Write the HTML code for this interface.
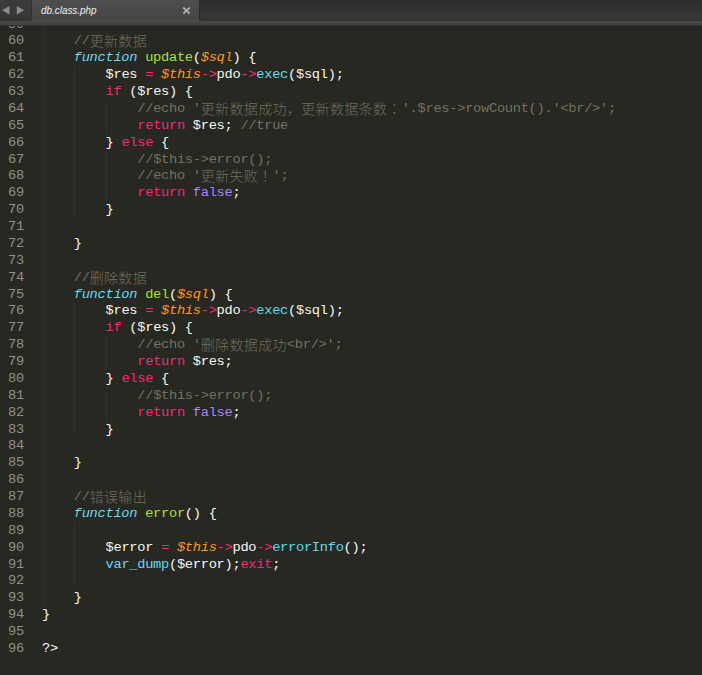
<!DOCTYPE html>
<html lang="zh-CN">
<head>
<meta charset="utf-8">
<title>db.class.php</title>
<style>
html,body{margin:0;padding:0;}
body{width:702px;height:675px;overflow:hidden;background:#272822;position:relative;font-family:"Liberation Mono","Noto Sans CJK SC",monospace;}
#ed{position:absolute;left:0;top:0;width:702px;height:675px;overflow:hidden;background:#272822;}
.ln,.cl{position:absolute;height:17px;line-height:17px;white-space:pre;font-family:"Liberation Mono","Noto Sans CJK SC",monospace;font-size:13.7px;letter-spacing:-0.28px;}
.ln{left:8px;width:16px;color:#8f908a;}
.cl{color:#f8f8f2;}
.c{color:#75715e}
.k{color:#f92672}
.s{color:#66d9ef;font-style:italic}
.f{color:#a6e22e}
.p{color:#fd971f;font-style:italic}
.b{color:#66d9ef}
.n{color:#ae81ff}
.z{line-height:0;color:#716d5b;font-weight:300;font-family:"Noto Sans CJK SC",sans-serif;font-size:14px;letter-spacing:0.35px;vertical-align:-1.6px;}
.j{font-family:"Noto Sans CJK JP","Noto Sans CJK SC",sans-serif}
.g{position:absolute;width:1px;background:repeating-linear-gradient(to bottom,#393a34 0,#393a34 1px,transparent 1px,transparent 2px);}
#tabs{position:absolute;left:0;top:0;width:702px;height:26px;background:linear-gradient(to bottom,#4e4e4e 0,#464646 20px,#4b4b4b 20px,#4b4b4b 21.5px,#454545 22px,#444444 25px,#31322d 25px,#31322d 26px);}
#tabs .left{position:absolute;left:0;top:0;width:31px;height:20px;background:linear-gradient(#3b3b3b,#373737);border-right:1px solid #313131;border-bottom:1px solid #313131;border-bottom-right-radius:3px;}
#tabs .right{position:absolute;left:199px;top:0;width:503px;height:20px;background:linear-gradient(#2d2d2d,#373737);border-left:1px solid #2a2a2a;border-bottom:1px solid #2e2e2e;border-bottom-left-radius:3px;}
#tabs .title{position:absolute;left:40.7px;top:0;height:21px;line-height:21px;font-family:"Liberation Sans","Noto Sans CJK SC",sans-serif;font-style:italic;font-size:11.5px;color:#eeeeee;transform:scaleX(0.86);transform-origin:0 0;white-space:nowrap;}
#tabs .x{position:absolute;left:182px;top:6px;width:9px;height:9px;}
#tabs .al{position:absolute;left:0;top:0;width:32px;height:21px;}
</style>
</head>
<body>
<div id="ed">
<div class="ln" style="top:16px">59</div>
<div class="ln" style="top:32px">60</div>
<div class="cl" style="top:32px;left:73.76px"><span class="c">//</span><span class="z">更新数据</span></div>
<div class="ln" style="top:49px">61</div>
<div class="cl" style="top:49px;left:73.76px"><span class="s">function</span> <span class="f">update</span>(<span class="p">$sql</span>) {</div>
<div class="ln" style="top:66px">62</div>
<div class="cl" style="top:66px;left:105.52px">$res <span class="k">=</span> <span class="p">$this</span><span class="k">-&gt;</span>pdo<span class="k">-&gt;</span><span class="b">exec</span>($sql);</div>
<div class="ln" style="top:83px">63</div>
<div class="cl" style="top:83px;left:105.52px"><span class="k">if</span> ($res) {</div>
<div class="ln" style="top:100px">64</div>
<div class="cl" style="top:100px;left:137.28px"><span class="c">//echo '</span><span class="z">更新数据成功，更新数据条数<span class="j" lang="ja">：</span></span><span class="c">'.$res-&gt;rowCount().'&lt;br/&gt;';</span></div>
<div class="ln" style="top:117px">65</div>
<div class="cl" style="top:117px;left:137.28px"><span class="k">return</span> $res; <span class="c">//true</span></div>
<div class="ln" style="top:134px">66</div>
<div class="cl" style="top:134px;left:105.52px">} <span class="k">else</span> {</div>
<div class="ln" style="top:151px">67</div>
<div class="cl" style="top:151px;left:137.28px"><span class="c">//$this-&gt;error();</span></div>
<div class="ln" style="top:167px">68</div>
<div class="cl" style="top:167px;left:137.28px"><span class="c">//echo '</span><span class="z">更新失败<span class="j" lang="ja">！</span></span><span class="c">';</span></div>
<div class="ln" style="top:184px">69</div>
<div class="cl" style="top:184px;left:137.28px"><span class="k">return</span> <span class="n">false</span>;</div>
<div class="ln" style="top:201px">70</div>
<div class="cl" style="top:201px;left:105.52px">}</div>
<div class="ln" style="top:218px">71</div>
<div class="ln" style="top:235px">72</div>
<div class="cl" style="top:235px;left:73.76px">}</div>
<div class="ln" style="top:252px">73</div>
<div class="ln" style="top:269px">74</div>
<div class="cl" style="top:269px;left:73.76px"><span class="c">//</span><span class="z">删除数据</span></div>
<div class="ln" style="top:286px">75</div>
<div class="cl" style="top:286px;left:73.76px"><span class="s">function</span> <span class="f">del</span>(<span class="p">$sql</span>) {</div>
<div class="ln" style="top:302px">76</div>
<div class="cl" style="top:302px;left:105.52px">$res <span class="k">=</span> <span class="p">$this</span><span class="k">-&gt;</span>pdo<span class="k">-&gt;</span><span class="b">exec</span>($sql);</div>
<div class="ln" style="top:319px">77</div>
<div class="cl" style="top:319px;left:105.52px"><span class="k">if</span> ($res) {</div>
<div class="ln" style="top:336px">78</div>
<div class="cl" style="top:336px;left:137.28px"><span class="c">//echo '</span><span class="z">删除数据成功</span><span class="c">&lt;br/&gt;';</span></div>
<div class="ln" style="top:353px">79</div>
<div class="cl" style="top:353px;left:137.28px"><span class="k">return</span> $res;</div>
<div class="ln" style="top:370px">80</div>
<div class="cl" style="top:370px;left:105.52px">} <span class="k">else</span> {</div>
<div class="ln" style="top:387px">81</div>
<div class="cl" style="top:387px;left:137.28px"><span class="c">//$this-&gt;error();</span></div>
<div class="ln" style="top:404px">82</div>
<div class="cl" style="top:404px;left:137.28px"><span class="k">return</span> <span class="n">false</span>;</div>
<div class="ln" style="top:421px">83</div>
<div class="cl" style="top:421px;left:105.52px">}</div>
<div class="ln" style="top:437px">84</div>
<div class="ln" style="top:454px">85</div>
<div class="cl" style="top:454px;left:73.76px">}</div>
<div class="ln" style="top:471px">86</div>
<div class="ln" style="top:488px">87</div>
<div class="cl" style="top:488px;left:73.76px"><span class="c">//</span><span class="z">错误输出</span></div>
<div class="ln" style="top:505px">88</div>
<div class="cl" style="top:505px;left:73.76px"><span class="s">function</span> <span class="f">error</span>() {</div>
<div class="ln" style="top:522px">89</div>
<div class="ln" style="top:539px">90</div>
<div class="cl" style="top:539px;left:105.52px">$error <span class="k">=</span> <span class="p">$this</span><span class="k">-&gt;</span>pdo<span class="k">-&gt;</span><span class="b">errorInfo</span>();</div>
<div class="ln" style="top:556px">91</div>
<div class="cl" style="top:556px;left:105.52px"><span class="b">var_dump</span>($error);<span class="k">exit</span>;</div>
<div class="ln" style="top:572px">92</div>
<div class="ln" style="top:589px">93</div>
<div class="cl" style="top:589px;left:73.76px">}</div>
<div class="ln" style="top:606px">94</div>
<div class="cl" style="top:606px;left:42.00px">}</div>
<div class="ln" style="top:623px">95</div>
<div class="ln" style="top:640px">96</div>
<div class="cl" style="top:640px;left:42.00px">?&gt;</div>
<div class="g" style="left:43px;top:17px;height:589px"></div>
<div class="g" style="left:74px;top:67px;height:151px"></div>
<div class="g" style="left:106px;top:101px;height:33px"></div>
<div class="g" style="left:106px;top:152px;height:49px"></div>
<div class="g" style="left:74px;top:303px;height:134px"></div>
<div class="g" style="left:106px;top:337px;height:33px"></div>
<div class="g" style="left:106px;top:388px;height:33px"></div>
<div class="g" style="left:74px;top:523px;height:66px"></div>
</div>
<div id="tabs">
<div class="left"><svg class="al" viewBox="0 0 32 21"><path d="M2.2 10.3 L9.4 6.1 L9.4 14.5 Z M24 10.3 L16.8 6.1 L16.8 14.5 Z" fill="#8b8b8b"/></svg></div>
<div class="right"></div>
<div class="title">db.class.php</div>
<svg class="x" viewBox="0 0 9 9"><path d="M1.3 1.5 L7.7 7.7 M7.7 1.5 L1.3 7.7" stroke="#aeaeae" stroke-width="1.8" fill="none"/></svg>
</div>
</body>
</html>
